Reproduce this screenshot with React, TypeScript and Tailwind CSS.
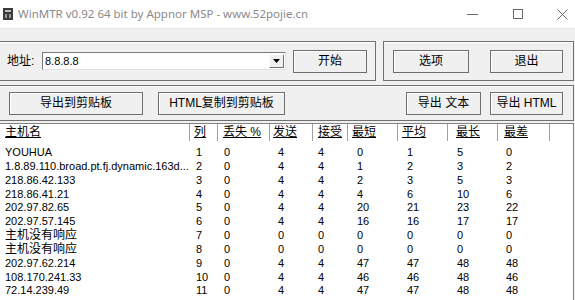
import React from "react"

const cols = [
  { label: "主机名", w: "w-[190px]", hx: "pl-[5px]", dx: "pl-[5px]" },
  { label: "列", w: "w-[28px]", hx: "pl-[4px]", dx: "pl-[6px]" },
  { label: "丢失 %", w: "w-[52px]", hx: "pl-[5px]", dx: "pl-[6px]" },
  { label: "发送", w: "w-[43px]", hx: "pl-[3px]", dx: "pl-[8px]" },
  { label: "接受", w: "w-[35px]", hx: "pl-[5px]", dx: "pl-[5px]" },
  { label: "最短", w: "w-[50px]", hx: "pl-[4px]", dx: "pl-[9px]" },
  { label: "平均", w: "w-[50px]", hx: "pl-[4px]", dx: "pl-[9px]" },
  { label: "最长", w: "w-[50px]", hx: "pl-[8px]", dx: "pl-[9px]" },
  { label: "最差", w: "w-[52px]", hx: "pl-[6px]", dx: "pl-[8px]" },
]

const rows = [
  ["YOUHUA", "1", "0", "4", "4", "0", "1", "5", "0"],
  ["1.8.89.110.broad.pt.fj.dynamic.163d...", "2", "0", "4", "4", "1", "2", "3", "2"],
  ["218.86.42.133", "3", "0", "4", "4", "2", "3", "5", "3"],
  ["218.86.41.21", "4", "0", "4", "4", "4", "6", "10", "6"],
  ["202.97.82.65", "5", "0", "4", "4", "20", "21", "23", "22"],
  ["202.97.57.145", "6", "0", "4", "4", "16", "16", "17", "17"],
  ["主机没有响应", "7", "0", "0", "0", "0", "0", "0", "0"],
  ["主机没有响应", "8", "0", "0", "0", "0", "0", "0", "0"],
  ["202.97.62.214", "9", "0", "4", "4", "47", "47", "48", "48"],
  ["108.170.241.33", "10", "0", "4", "4", "46", "46", "48", "46"],
  ["72.14.239.49", "11", "0", "4", "4", "47", "47", "48", "48"],
]

function Btn({ w, children }: { w: string; children: React.ReactNode }) {
  return (
    <div
      className={`${w} h-[23px] shrink-0 bg-[#f0f0f0] border border-[#6e6e6e] shadow-[inset_1px_1px_0_#fff] flex items-center justify-center text-[12px] leading-none`}
    >
      {children}
    </div>
  )
}

function AppIcon() {
  return (
    <svg width="10" height="12" viewBox="0 0 10 12" className="ml-[3px] shrink-0">
      <rect x="0" y="0" width="10" height="12" fill="#3a3a3a" />
      <rect x="2" y="2" width="6" height="2" fill="#bdbdbd" />
      <rect x="2" y="6" width="2" height="4" fill="#9a9a9a" />
      <rect x="6" y="6" width="2" height="4" fill="#9a9a9a" />
    </svg>
  )
}

export default function App() {
  return (
    <div className="w-[575px] h-[300px] overflow-hidden bg-[#f0f0f0] text-black font-['Liberation_Sans','Noto_Sans_CJK_SC',sans-serif]">
      {/* Title bar */}
      <div className="h-[29px] bg-white border-b border-[#e6e6e6] flex items-center">
        <AppIcon />
        <span className="ml-[5px] text-[11.5px] text-[#8a8a8a] font-['Noto_Sans','Noto_Sans_CJK_SC',sans-serif]">
          WinMTR v0.92 64 bit by Appnor MSP - www.52pojie.cn
        </span>
        <div className="ml-auto mr-[-10px] flex h-full">
          <div className="w-[45px] flex items-center justify-center">
            <svg width="11" height="1" viewBox="0 0 11 1">
              <rect width="11" height="1" fill="#6a6a6a" />
            </svg>
          </div>
          <div className="w-[45px] flex items-center justify-center">
            <svg width="10" height="10" viewBox="0 0 10 10">
              <rect x="0.5" y="0.5" width="9" height="9" fill="none" stroke="#6a6a6a" />
            </svg>
          </div>
          <div className="w-[45px] flex items-center justify-center">
            <svg width="11" height="11" viewBox="0 0 11 11">
              <path d="M0.5 0.5L10.5 10.5M10.5 0.5L0.5 10.5" stroke="#6a6a6a" strokeWidth="1" />
            </svg>
          </div>
        </div>
      </div>

      {/* Address + options */}
      <div className="mt-[12px] flex">
        <div className="w-[376px] h-[40px] shrink-0 border border-l-0 border-[#707070] shadow-[inset_0_1px_0_#fff] flex items-center pl-[7px]">
          <span className="w-[35px] text-[12px] leading-none">地址:</span>
          <div className="w-[244px] h-[18px] bg-white border border-[#7a7a7a] border-b-[#e3e3e3] border-r-[#e3e3e3] flex items-center">
            <span className="flex-1 pl-[2px] text-[11px] leading-none">8.8.8.8</span>
            <div className="w-[15px] h-[14px] mr-[1px] bg-[#f0f0f0] border border-white border-b-[#707070] border-r-[#707070] flex items-center justify-center">
              <svg width="7" height="4" viewBox="0 0 7 4">
                <path d="M0 0h7L3.5 4z" fill="#000" />
              </svg>
            </div>
          </div>
          <div className="ml-[7px]">
            <Btn w="w-[74px]">开始</Btn>
          </div>
        </div>
        <div className="ml-[7px] w-[191px] h-[40px] shrink-0 border border-[#707070] shadow-[inset_0_1px_0_#fff] flex items-center pl-[9px] gap-[21px]">
          <Btn w="w-[76px]">选项</Btn>
          <Btn w="w-[73px]">退出</Btn>
        </div>
      </div>

      {/* Export buttons */}
      <div className="mt-[4px] w-[574px] h-[36px] border border-l-0 border-[#707070] shadow-[inset_0_1px_0_#fff] flex items-center">
        <div className="ml-[9px]">
          <Btn w="w-[134px]">导出到剪贴板</Btn>
        </div>
        <div className="ml-[15px]">
          <Btn w="w-[127px]">HTML复制到剪贴板</Btn>
        </div>
        <div className="ml-[121px]">
          <Btn w="w-[75px]">导出 文本</Btn>
        </div>
        <div className="ml-[9px]">
          <Btn w="w-[73px]">导出 HTML</Btn>
        </div>
      </div>

      {/* Results list */}
      <div className="mt-[2px] w-[574px] h-[200px] bg-white border-t border-r border-[#828282]">
        <div className="flex h-[17px]">
          {cols.map((c) => (
            <div
              key={c.label}
              className={`${c.w} ${c.hx} shrink-0 border-r border-[#a0a0a0] text-[12px] leading-[17px] whitespace-nowrap`}
            >
              <span className="underline decoration-1 underline-offset-[1px]">{c.label}</span>
            </div>
          ))}
          <div className="flex-1" />
        </div>
        <div className="pt-[5px]">
          {rows.map((r, i) => (
            <div key={i} className="flex h-[13.85px] leading-[13.85px] text-[11px]">
              {r.map((v, j) => (
                <div
                  key={j}
                  className={`${cols[j].w} ${cols[j].dx} shrink-0 whitespace-nowrap ${/[\u4e00-\u9fff]/.test(v) ? "text-[12px]" : ""}`}
                >
                  {v}
                </div>
              ))}
            </div>
          ))}
        </div>
      </div>
    </div>
  )
}
